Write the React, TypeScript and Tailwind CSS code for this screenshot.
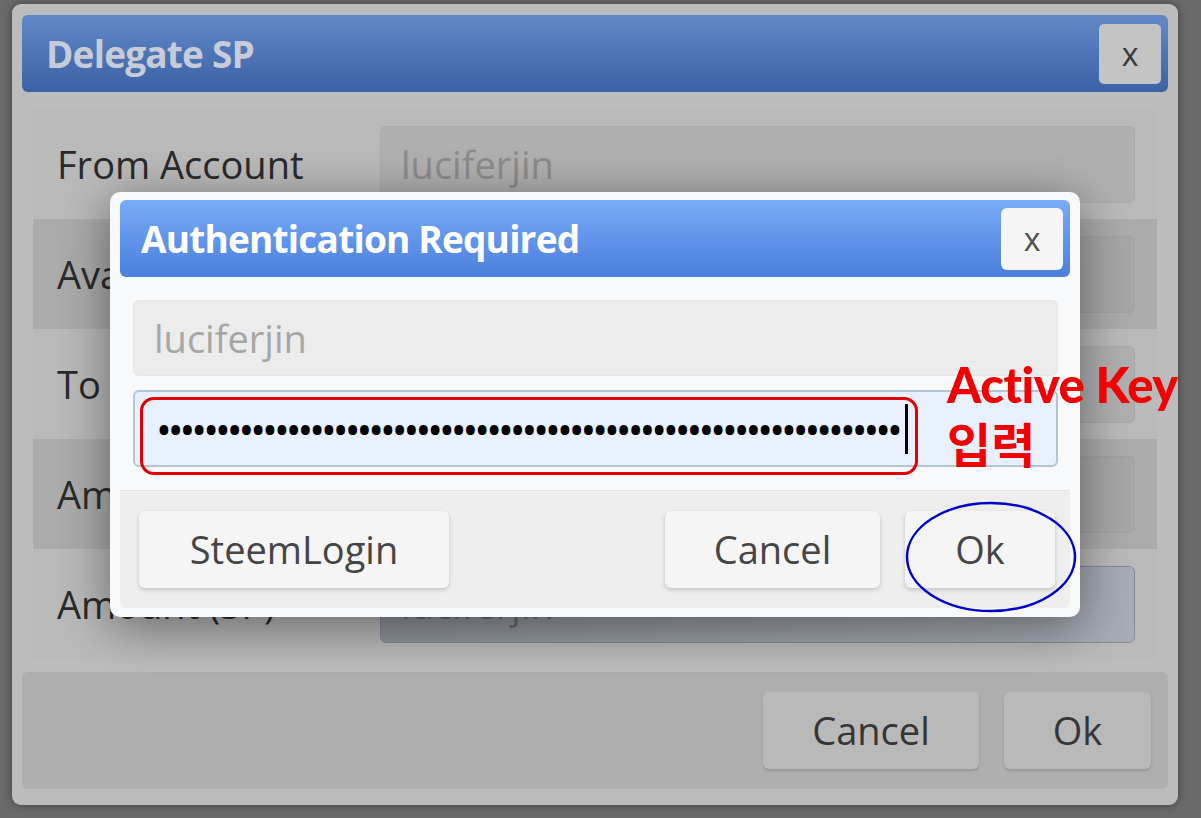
import React from "react";

type Row = {
  label: string;
  value?: string;
  dark?: boolean;
  focus?: boolean;
};

const rows: Row[] = [
  { label: "From Account", value: "luciferjin" },
  { label: "Available SP", dark: true },
  { label: "To Account" },
  { label: "Amount", dark: true },
  { label: "Amount (SP)", value: "luciferjin", focus: true },
];

const DOTS = "•".repeat(63);

function OuterDialog() {
  return (
    <div className="ml-[12px] mt-[3px] w-[1166px] h-[801px] rounded-[9px] bg-[#bcbcbc] px-[10px] pt-[11px] shadow-[0_0_8px_rgba(0,0,0,0.4)]">
      {/* header */}
      <div className="h-[77px] rounded-[6px] bg-gradient-to-b from-[#6188c6] to-[#3b62a6] flex items-center justify-between pl-[24px] pr-[7px]">
        <span className="text-[37px] font-bold tracking-[-0.8px] text-[#c6cdd8]">Delegate SP</span>
        <div className="w-[62px] h-[60px] rounded-[5px] bg-[#c4c4c4] flex items-center justify-center text-[32px] text-[#3a3a3a]">
          x
        </div>
      </div>

      {/* rows */}
      <div className="mt-[17px] px-[11px] flex flex-col">
        {rows.map((r) => (
          <div
            key={r.label}
            className={`h-[110px] flex items-center ${r.dark ? "bg-[#acacac]" : "bg-[#bababa]"}`}
          >
            <div className="w-[347px] pl-[24px] text-[38px] text-[#2a2a2a] whitespace-nowrap">
              {r.label}
            </div>
            <div
              className={`w-[755px] h-[77px] rounded-[6px] border flex items-center pl-[20px] text-[38px] ${
                r.focus
                  ? "bg-gradient-to-r from-[#8f949c] to-[#a7acb5] border-[#858a93] text-[#6a6d72]"
                  : r.dark
                  ? "bg-[#a7a7a7] border-[#a2a2a2] text-[#8a8a8a]"
                  : "bg-[#b0b0b0] border-[#a9a9a9] text-[#8c8c8c]"
              }`}
            >
              {r.value}
            </div>
          </div>
        ))}
      </div>

      {/* footer */}
      <div className="mt-[13px] h-[117px] rounded-[6px] bg-[#afafaf] flex items-center justify-end gap-[25px] pr-[17px]">
        <div className="w-[216px] h-[77px] rounded-[6px] bg-[#b9b9b9] shadow-[0_2px_3px_rgba(0,0,0,0.15)] flex items-center justify-center text-[38px] text-[#353535]">
          Cancel
        </div>
        <div className="w-[147px] h-[77px] rounded-[6px] bg-[#b9b9b9] shadow-[0_2px_3px_rgba(0,0,0,0.15)] flex items-center justify-center text-[38px] text-[#353535]">
          Ok
        </div>
      </div>
    </div>
  );
}

function AuthDialog() {
  return (
    <div className="absolute left-[110px] top-[192px] w-[970px] h-[425px] rounded-[10px] bg-[#f8f9fa] px-[10px] pt-[8px] shadow-[0_10px_50px_rgba(0,0,0,0.45)] flex flex-col">
      {/* header */}
      <div className="h-[77px] rounded-[6px] bg-gradient-to-b from-[#7aabf7] to-[#4a7fdc] flex items-center justify-between pl-[21px] pr-[7px]">
        <span className="text-[37px] font-bold tracking-[-0.8px] text-white">Authentication Required</span>
        <div className="w-[62px] h-[62px] rounded-[6px] bg-[#f5f5f5] flex items-center justify-center text-[32px] text-[#505050]">
          x
        </div>
      </div>

      {/* inputs */}
      <div className="mt-[23px] pl-[13px] flex flex-col gap-[14px]">
        <div className="w-[925px] h-[76px] rounded-[6px] bg-[#ececec] border border-[#e6e6e6] flex items-center pl-[20px] text-[38px] text-[#a6a6a6]">
          luciferjin
        </div>
        <div className="w-[925px] h-[77px] rounded-[6px] bg-[#e8f0fd] border-2 border-[#b3c3da] flex items-center pl-[21px] overflow-hidden">
          <span className="text-[42px] leading-none tracking-[-4px] text-black whitespace-nowrap">{DOTS}</span>
          <span className="inline-block shrink-0 w-[3px] h-[50px] bg-black ml-[6px]" />
        </div>
      </div>

      {/* footer */}
      <div className="mt-[23px] h-[118px] rounded-b-[6px] bg-[#eeeeee] border-t border-[#e4e4e4] flex items-center pl-[19px] pr-[15px]">
        <div className="w-[310px] h-[77px] rounded-[6px] bg-[#f5f5f5] shadow-[0_2px_4px_rgba(0,0,0,0.18)] flex items-center justify-center text-[38px] text-[#454545]">
          SteemLogin
        </div>
        <div className="flex-1" />
        <div className="w-[215px] h-[77px] rounded-[6px] bg-[#f5f5f5] shadow-[0_2px_4px_rgba(0,0,0,0.18)] flex items-center justify-center text-[38px] text-[#454545]">
          Cancel
        </div>
        <div className="ml-[25px] w-[150px] h-[77px] rounded-[6px] bg-[#f5f5f5] shadow-[0_2px_4px_rgba(0,0,0,0.18)] flex items-center justify-center text-[38px] text-[#454545]">
          Ok
        </div>
      </div>
    </div>
  );
}

export default function App() {
  return (
    <div className="relative w-[1201px] h-[818px] overflow-hidden bg-[#6a6a6a] pt-px font-['Open_Sans',sans-serif]">
      <OuterDialog />
      <AuthDialog />

      {/* annotations */}
      <div className="absolute left-[140px] top-[397px] w-[778px] h-[78px] rounded-[14px] border-[3px] border-[#e10000]" />
      <div className="absolute left-[947px] top-[360px] text-[49px] leading-none font-black text-[#f00000] font-['Lato',sans-serif] whitespace-nowrap tracking-[-0.5px]">
        Active Key
      </div>
      <div className="absolute left-[947px] top-[418px] text-[48px] leading-none font-bold text-[#f00000] font-['Noto_Sans_CJK_KR',sans-serif]">
        입력
      </div>
      <svg className="absolute left-[904px] top-[500px]" width="174" height="114" viewBox="0 0 174 114">
        <ellipse cx="87" cy="57" rx="84" ry="54" fill="none" stroke="#0000cc" strokeWidth="2.5" />
      </svg>
    </div>
  );
}
